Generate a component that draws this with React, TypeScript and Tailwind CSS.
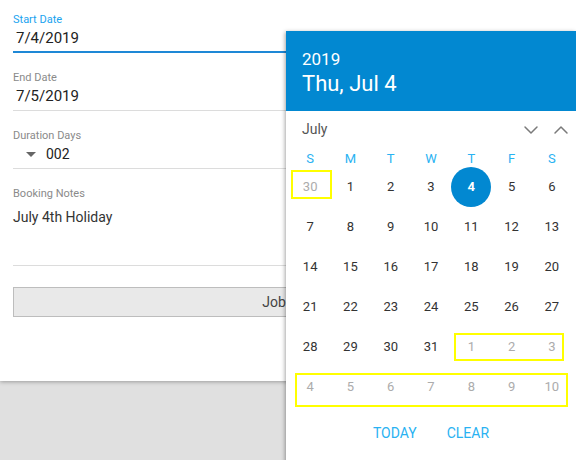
import { ChevronDown, ChevronUp } from "lucide-react";

type Day = { n: number; muted?: boolean; selected?: boolean };

const weekdays = ["S", "M", "T", "W", "T", "F", "S"];

function buildWeeks(): Day[][] {
  const days: Day[] = [{ n: 30, muted: true }];
  for (let i = 1; i <= 31; i++) days.push({ n: i, selected: i === 4 });
  for (let i = 1; i <= 10; i++) days.push({ n: i, muted: true });
  const weeks: Day[][] = [];
  for (let i = 0; i < days.length; i += 7) weeks.push(days.slice(i, i + 7));
  return weeks;
}

function Field({
  label,
  focused = false,
  className = "",
  children,
}: {
  label: string;
  focused?: boolean;
  className?: string;
  children: React.ReactNode;
}) {
  return (
    <div
      className={
        focused
          ? `border-b-2 border-[#1e88d6] pb-[3px] ${className}`
          : `border-b border-[#dcdcdc] pb-[4px] ${className}`
      }
    >
      <div className={`text-[11px] leading-[14px] ${focused ? "text-[#1aa3ef]" : "text-[#8a8a8a]"}`}>{label}</div>
      {children}
    </div>
  );
}

function DatePicker() {
  const weeks = buildWeeks();
  return (
    <div className="absolute left-[286px] top-[31px] w-[290px] h-[440px] bg-white shadow-[-1px_1px_4px_rgba(0,0,0,0.35)]">
      <div className="h-[80px] bg-[#0288d1] pl-[16px] pt-[18px] text-white">
        <div className="text-[17px] leading-[20px]">2019</div>
        <div className="text-[22px] leading-[30px]">Thu, Jul 4</div>
      </div>
      <div className="flex h-[37px] items-center pl-[16px] pr-[3px]">
        <span className="flex-1 text-[14px] text-[#555]">July</span>
        <button type="button" className="flex size-[24px] items-center justify-center text-[#7a7a7a]">
          <ChevronDown className="size-[24px]" strokeWidth={1.5} />
        </button>
        <button type="button" className="ml-[6px] flex size-[24px] items-center justify-center text-[#7a7a7a]">
          <ChevronUp className="size-[24px]" strokeWidth={1.5} />
        </button>
      </div>
      <div className="px-[4px]">
        <div className="grid h-[19px] grid-cols-7 text-center text-[13px] leading-[21px] text-[#29b2f2]">
          {weekdays.map((d, i) => (
            <span key={i}>{d}</span>
          ))}
        </div>
        {weeks.map((week, wi) => (
          <div key={wi} className="grid h-[40px] grid-cols-7">
            {week.map((d, di) => (
              <div key={di} className="flex items-center justify-center">
                {d.selected ? (
                  <span className="flex size-[40px] items-center justify-center rounded-full bg-[#0288d1] text-[13px] font-bold text-white">
                    {d.n}
                  </span>
                ) : (
                  <span className={`text-[13px] ${d.muted ? "text-[#acacac]" : "text-[#333]"}`}>{d.n}</span>
                )}
              </div>
            ))}
          </div>
        ))}
      </div>
      <div className="mt-[8px] flex h-[36px] items-center justify-center text-[14px] text-[#29b2f2]">
        <button type="button" className="px-[15px]">TODAY</button>
        <button type="button" className="px-[15px]">CLEAR</button>
      </div>
    </div>
  );
}

export default function App() {
  return (
    <div className="relative h-[460px] w-[576px] overflow-hidden bg-[#e0e0e0] font-['Roboto',sans-serif]">
      <div className="h-[381px] bg-white px-[13px] pt-[13px] shadow-[0_1px_4px_rgba(0,0,0,0.3)]">
        <Field label="Start Date" focused>
          <div className="mt-[1px] pl-[3px] text-[15px] leading-[20px] text-[#222]">7/4/2019</div>
        </Field>
        <Field label="End Date" className="mt-[18px]">
          <div className="mt-[1px] pl-[3px] text-[15px] leading-[20px] text-[#222]">7/5/2019</div>
        </Field>
        <Field label="Duration Days" className="mt-[18px]">
          <div className="mt-[1px] flex h-[20px] items-center text-[14px] text-[#222]">
            <svg width="10" height="5" viewBox="0 0 10 5" className="ml-[13px] mr-[10px]">
              <path d="M0 0h10L5 5z" fill="#666" />
            </svg>
            <span>002</span>
          </div>
        </Field>
        <Field label="Booking Notes" className="mt-[18px]">
          <div className="mt-[6px] h-[54px] text-[14px] leading-[20px] text-[#333]">July 4th Holiday</div>
        </Field>
        <button
          type="button"
          className="mt-[21px] h-[30px] w-full border border-[#bdbdbd] bg-[#e9e9e9] text-[14px] text-[#444]"
        >
          Job Info
        </button>
      </div>
      <DatePicker />
      <div className="pointer-events-none absolute left-[291px] top-[170px] h-[29px] w-[41px] border-2 border-[#ffff00]" />
      <div className="pointer-events-none absolute left-[454px] top-[333px] h-[28px] w-[110px] border-2 border-[#ffff00]" />
      <div className="pointer-events-none absolute left-[295px] top-[373px] h-[34px] w-[273px] border-2 border-[#ffff00]" />
    </div>
  );
}
